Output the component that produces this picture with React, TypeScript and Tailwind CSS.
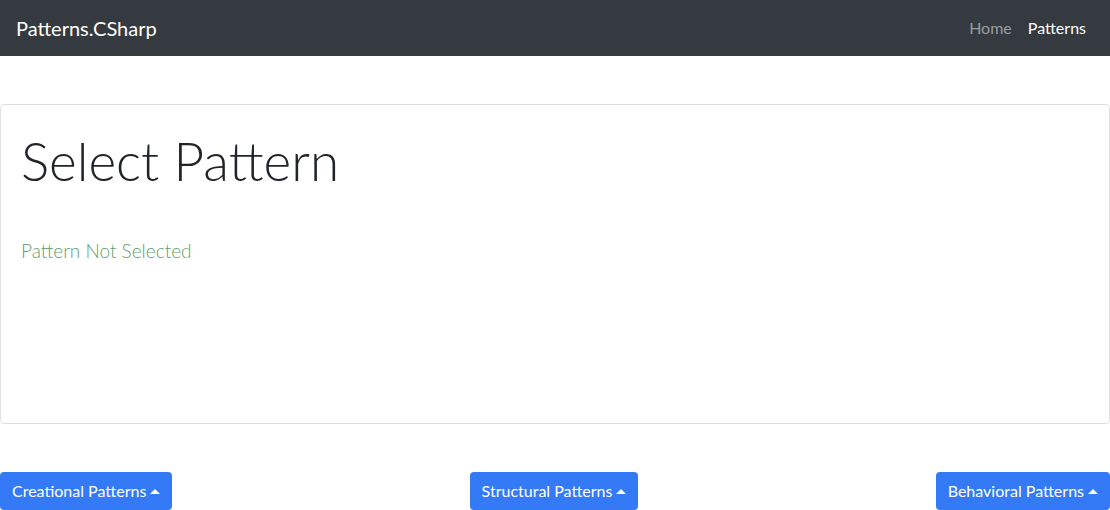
import React from "react";

function Caret() {
  return (
    <span className="ml-[4px] inline-block h-0 w-0 border-x-[5px] border-b-[5px] border-x-transparent border-b-white align-[3px]" />
  );
}

function DropBtn({ label }: { label: string }) {
  return (
    <button className="flex h-[38px] items-center rounded-[4px] bg-[#347af6] px-[12px] text-[16px] text-white">
      {label}
      <Caret />
    </button>
  );
}

export default function App() {
  return (
    <div className="min-h-[510px] bg-white font-['Lato','Open_Sans',sans-serif] text-[#212529]">
      <nav className="flex h-[56px] items-center justify-between bg-[#343a40] px-[16px]">
        <span className="text-[20px] text-white">Patterns.CSharp</span>
        <div className="flex text-[16px]">
          <span className="px-[8px] text-[#9a9da0]">Home</span>
          <span className="px-[8px] text-white">Patterns</span>
        </div>
      </nav>
      <div className="mt-[48px] h-[320px] rounded-[4px] border border-[#dfdfdf] p-[20px]">
        <h1 className="text-[53px] font-light leading-[72px]">Select Pattern</h1>
        <p className="mt-[40px] text-[19px] font-light text-[#5fa06e]">Pattern Not Selected</p>
      </div>
      <div className="mt-[48px] flex justify-between">
        <DropBtn label="Creational Patterns" />
        <DropBtn label="Structural Patterns" />
        <DropBtn label="Behavioral Patterns" />
      </div>
    </div>
  );
}
